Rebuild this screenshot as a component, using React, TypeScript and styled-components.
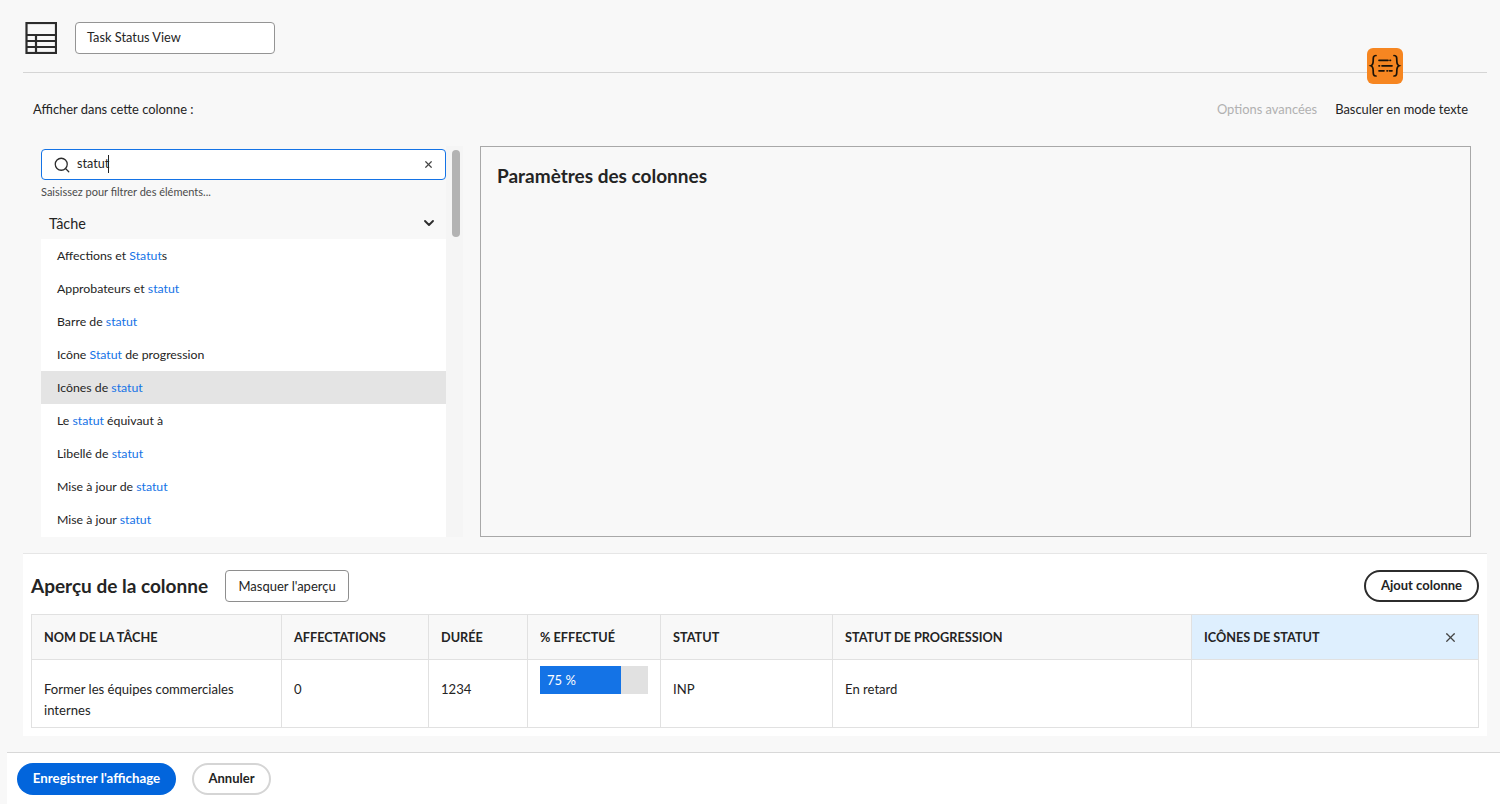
import React from "react"
import styled, { createGlobalStyle } from "styled-components"
import { Search, X, ChevronDown } from "lucide-react"

const GlobalStyle = createGlobalStyle`
  html, body { margin:0; padding:0; height:100%; overflow:hidden; }
  body {
    background:#f8f8f8;
    font-family:Lato, "Noto Sans", "Liberation Sans", sans-serif;
    color:#242424;
  }
`

// Each row of the list: the part in blue is flagged with match
const ITEMS: { text: string; match?: boolean }[][] = [
  [{ text: "Affections et " }, { text: "Statut", match: true }, { text: "s" }],
  [{ text: "Approbateurs et " }, { text: "statut", match: true }],
  [{ text: "Barre de " }, { text: "statut", match: true }],
  [{ text: "Icône " }, { text: "Statut", match: true }, { text: " de progression" }],
  [{ text: "Icônes de " }, { text: "statut", match: true }],
  [{ text: "Le " }, { text: "statut", match: true }, { text: " équivaut à" }],
  [{ text: "Libellé de " }, { text: "statut", match: true }],
  [{ text: "Mise à jour de " }, { text: "statut", match: true }],
  [{ text: "Mise à jour " }, { text: "statut", match: true }],
]

const COLUMNS = [
  { title: "NOM DE LA TÂCHE" },
  { title: "AFFECTATIONS" },
  { title: "DURÉE" },
  { title: "% EFFECTUÉ" },
  { title: "STATUT" },
  { title: "STATUT DE PROGRESSION" },
  { title: "ICÔNES DE STATUT", active: true },
]

const TableIcon = () => (
  <svg width="32" height="32" viewBox="0 0 32 32" fill="none" stroke="#2c2c2c" strokeWidth="2.2">
    <rect x="1.500" y="1" width="29.500" height="30" />
    <path d="M1 13h30M1 19h30M1 25h30M11 13v18" />
  </svg>
)

const TextModeIcon = () => (
  <svg width="36" height="36" viewBox="0 0 36 36" fill="none" stroke="#1a1208" strokeWidth="1.7" strokeLinecap="round">
    <path d="M9 7.500C6.200 7.500 6.200 9.500 6.200 12.500S6 17 3.900 17.800C6 18.600 6.200 20 6.200 23S6.200 28 9 28" />
    <path d="M27 7.500c2.800 0 2.800 2 2.800 5s.2 4.500 2.300 5.300c-2.100.8-2.300 2.200-2.300 5.200s0 5-2.800 5" />
    <path d="M12 12.300h9M23 12.300h.5M12 17.800h.5M15 17.800h10M12 22.800h5M20 22.800h.5M22.500 22.800h2.500" />
  </svg>
)

export default function App() {
  return (
    <Page>
      <GlobalStyle />
      <Main>
        <Header>
          <TableIcon />
          <NameInput>Task Status View</NameInput>
          <TextModeBadge><TextModeIcon /></TextModeBadge>
        </Header>

        <OptionsRow>
          <span>Afficher dans cette colonne :</span>
          <OptionLinks>
            <MutedLink>Options avancées</MutedLink>
            <span>Basculer en mode texte</span>
          </OptionLinks>
        </OptionsRow>

        <Editor>
          <FieldColumn>
            <FieldInner>
              <SearchBox>
                <Search size={18} strokeWidth={1.7} color="#2c2c2c" />
                <SearchText>statut<Caret /></SearchText>
                <X size={11} strokeWidth={2.6} color="#444" />
              </SearchBox>
              <Hint>Saisissez pour filtrer des éléments...</Hint>
              <GroupTitle>
                <span>Tâche</span>
                <ChevronDown size={16} strokeWidth={2.8} color="#2c2c2c" />
              </GroupTitle>
              <FieldList>
                {ITEMS.map((parts, i) => (
                  <FieldItem key={i} $selected={i === 4}>
                    {parts.map((part, j) =>
                      part.match ? <Match key={j}>{part.text}</Match> : <span key={j}>{part.text}</span>
                    )}
                  </FieldItem>
                ))}
              </FieldList>
            </FieldInner>
            <ScrollThumb />
          </FieldColumn>
          <SettingsPanel>
            <SettingsTitle>Paramètres des colonnes</SettingsTitle>
          </SettingsPanel>
        </Editor>

        <Preview>
          <PreviewHeader>
            <PreviewTitle>Aperçu de la colonne</PreviewTitle>
            <HideButton>Masquer l'aperçu</HideButton>
            <AddButton>Ajout colonne</AddButton>
          </PreviewHeader>
          <TableGrid>
            {COLUMNS.map(col => (
              <HeadCell key={col.title} $active={col.active}>
                {col.title}
                {col.active && <X size={15} strokeWidth={2} color="#444" />}
              </HeadCell>
            ))}
            <Cell>Former les équipes commerciales internes</Cell>
            <Cell>0</Cell>
            <Cell>1234</Cell>
            <ProgressCell>
              <ProgressTrack>
                <ProgressFill style={{ width: "75%" }}>75 %</ProgressFill>
              </ProgressTrack>
            </ProgressCell>
            <Cell>INP</Cell>
            <Cell>En retard</Cell>
            <Cell />
          </TableGrid>
        </Preview>
      </Main>

      <Footer>
        <SaveButton>Enregistrer l'affichage</SaveButton>
        <CancelButton>Annuler</CancelButton>
      </Footer>
    </Page>
  )
}

const Page = styled.div`
  height:804px;
  display:flex;
  flex-direction:column;
  padding-left:7px;
  box-sizing:border-box;
`
const Main = styled.div`
  flex:1;
  margin:0 13px 0 16px;
  display:flex;
  flex-direction:column;
`
const Header = styled.div`
  position:relative;
  height:72px;
  box-sizing:content-box;
  border-bottom:1px solid #d5d5d5;
  display:flex;
  align-items:flex-start;
  gap:18px;
  padding-left:2px;
  padding-top:0;
  svg { margin-top:22px; flex:none; }
`
const NameInput = styled.div`
  margin-top:22px;
  width:200px;
  height:32px;
  box-sizing:border-box;
  background:#fff;
  border:1px solid #949494;
  border-radius:4px;
  padding-left:11px;
  font-size:12.8px;
  line-height:28px;
`
const TextModeBadge = styled.div`
  position:absolute;
  top:48px;
  left:1344px;
  width:36px;
  height:36px;
  border-radius:6px;
  background:#f68621;
  svg { margin:0; display:block; }
`
const OptionsRow = styled.div`
  height:73px;
  display:flex;
  justify-content:space-between;
  align-items:flex-start;
  padding:27px 19px 0 10px;
  box-sizing:border-box;
  font-size:12.9px;
  line-height:18px;
`
const OptionLinks = styled.div`
  display:flex;
  gap:18px;
`
const MutedLink = styled.span`
  color:#b1b1b1;
`
const Editor = styled.div`
  height:392px;
  display:flex;
  padding-left:18px;
`
const FieldColumn = styled.div`
  position:relative;
  width:422px;
  height:391px;
  background:#f5f5f5;
`
const FieldInner = styled.div`
  width:405px;
  display:flex;
  flex-direction:column;
  background:#f8f8f8;
  height:100%;
  padding-top:3px;
  box-sizing:border-box;
`
const SearchBox = styled.div`
  height:31px;
  box-sizing:border-box;
  border:1px solid #1473e6;
  border-radius:4px;
  background:#fff;
  display:flex;
  align-items:center;
  gap:6px;
  padding:0 11px;
  svg { flex:none; }
`
const SearchText = styled.div`
  flex:1;
  font-size:12.6px;
  line-height:20px;
  padding-bottom:2px;
`
const Caret = styled.span`
  display:inline-block;
  width:1px;
  height:18px;
  background:#222;
  vertical-align:middle;
  margin-left:-1px;
`
const Hint = styled.div`
  font-size:11px;
  line-height:14px;
  margin-top:5px;
  color:#4b4b4b;
`
const GroupTitle = styled.div`
  height:40px;
  box-sizing:border-box;
  display:flex;
  align-items:center;
  justify-content:space-between;
  padding:8px 9px 0 8px;
  font-size:14.4px;
`
const FieldList = styled.div`
  background:#fff;
  flex:1;
  overflow:hidden;
`
const FieldItem = styled.div<{ $selected?: boolean }>`
  height:33px;
  line-height:33px;
  padding-left:16px;
  font-size:12.3px;
  background:${p => (p.$selected ? "#e4e4e4" : "transparent")};
`
const Match = styled.span`
  color:#1473e6;
`
const ScrollThumb = styled.div`
  position:absolute;
  top:4px;
  left:411px;
  width:8px;
  height:87px;
  border-radius:4px;
  background:#b3b3b3;
`
const SettingsPanel = styled.div`
  margin-left:17px;
  width:991px;
  height:391px;
  box-sizing:border-box;
  border:1px solid #a8a8a8;
  background:#f8f8f8;
  padding:17px 16px;
`
const SettingsTitle = styled.h2`
  margin:0;
  font-size:19px;
  line-height:24px;
  font-weight:700;
`
const Preview = styled.section`
  margin-top:15px;
  height:183px;
  box-sizing:border-box;
  background:#fff;
  border-top:1px solid #e6e6e6;
  padding:16px 8px 0;
`
const PreviewHeader = styled.div`
  height:44px;
  display:flex;
  align-items:flex-start;
`
const PreviewTitle = styled.h2`
  margin:0 17px 0 0;
  font-size:19px;
  line-height:32px;
  font-weight:700;
`
const HideButton = styled.button`
  height:32px;
  width:124px;
  padding:0;
  background:#fff;
  border:1px solid #8e8e8e;
  border-radius:4px;
  font:inherit;
  font-size:13px;
  color:#242424;
`
const AddButton = styled.button`
  margin-left:auto;
  height:32px;
  width:115px;
  padding:0 0 2px;
  background:#fff;
  border:2px solid #2c2c2c;
  border-radius:16px;
  font:inherit;
  font-size:13px;
  font-weight:700;
  color:#242424;
`
const TableGrid = styled.div`
  display:grid;
  grid-template-columns:250px 147px 99px 133px 172px 359px 287px;
  grid-template-rows:45px 68px;
  border-top:1px solid #e1e1e1;
  border-left:1px solid #e1e1e1;
  width:1448px;
  box-sizing:border-box;
`
const HeadCell = styled.div<{ $active?: boolean }>`
  display:flex;
  align-items:center;
  justify-content:space-between;
  padding:0 20px 0 12px;
  box-sizing:border-box;
  background:${p => (p.$active ? "#deeffe" : "#f8f8f8")};
  border-right:1px solid #e1e1e1;
  border-bottom:1px solid #e1e1e1;
  font-size:12.7px;
  font-weight:700;
`
const Cell = styled.div`
  padding:19px 12px 0;
  box-sizing:border-box;
  background:#fff;
  border-right:1px solid #e1e1e1;
  border-bottom:1px solid #e1e1e1;
  font-size:13.1px;
  line-height:21px;
`
const ProgressCell = styled(Cell)`
  padding:6px 12px 0;
`
const ProgressTrack = styled.div`
  height:28px;
  background:#e1e1e1;
`
const ProgressFill = styled.div`
  height:100%;
  background:#1473e6;
  color:#fff;
  font-size:13px;
  line-height:28px;
  padding-left:7px;
  box-sizing:border-box;
`
const Footer = styled.footer`
  height:52px;
  box-sizing:border-box;
  background:#fff;
  border-top:1px solid #d8d8d8;
  display:flex;
  align-items:flex-start;
  gap:16px;
  padding:10px 0 0 10px;
`
const SaveButton = styled.button`
  height:32px;
  width:159px;
  padding:0 0 2px;
  border:none;
  border-radius:16px;
  background:#0265dc;
  color:#fff;
  font:inherit;
  font-size:13.3px;
  font-weight:700;
`
const CancelButton = styled.button`
  height:32px;
  width:79px;
  padding:0 0 2px;
  border:2px solid #d5d5d5;
  border-radius:16px;
  background:#fff;
  color:#242424;
  font:inherit;
  font-size:13px;
  font-weight:700;
`
